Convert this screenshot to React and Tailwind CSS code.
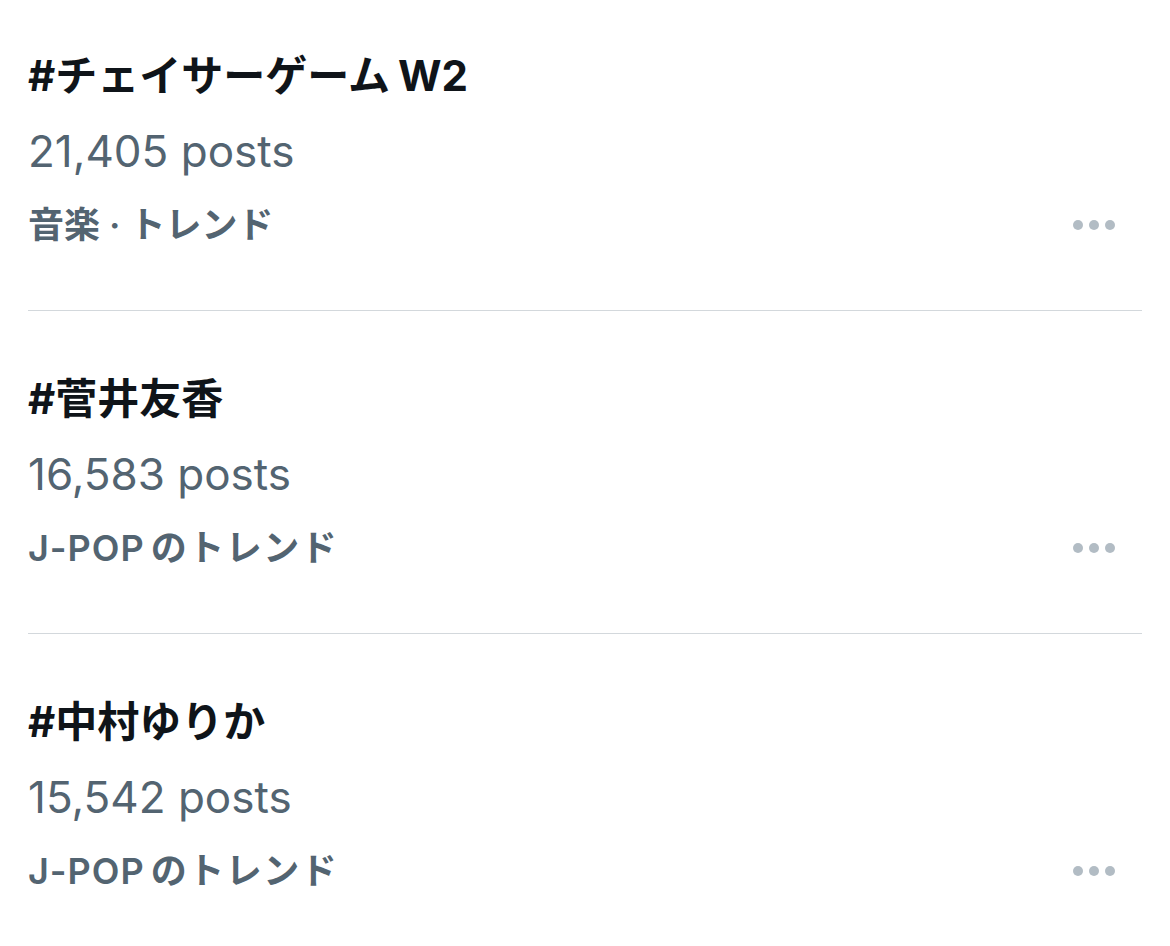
import React from "react";

const trends = [
  { tag: ["#チェイサーゲーム", "W2"], posts: "21,405 posts", category: ["音楽 · トレンド", ""] },
  { tag: ["#菅井友香", ""], posts: "16,583 posts", category: ["J-POP", "のトレンド"] },
  { tag: ["#中村ゆりか", ""], posts: "15,542 posts", category: ["J-POP", "のトレンド"] },
];

export default function App() {
  return (
    <div
      className="bg-white w-[1170px] h-[946px] overflow-hidden px-[28px]"
      style={{ fontFamily: 'Inter, "Noto Sans CJK JP", sans-serif' }}
    >
      {trends.map((t, i) => (
        <div
          key={t.tag[0]}
          className={
            (i === 0 ? "pt-[37px]" : "pt-[49px]") +
            " pb-[49px] border-b border-[#d3d8dc]"
          }
        >
          {/* Title */}
          <div className="h-[76px] flex items-center text-[42px] font-bold text-[#0f1419]">
            <span>{t.tag[0]}</span>
            {t.tag[1] && <span className="ml-[8px]">{t.tag[1]}</span>}
          </div>

          {/* Post count */}
          <div className="h-[76px] flex items-center text-[44px] text-[#536471]">
            {t.posts}
          </div>

          {/* Category + more */}
          <div className="h-[72px] flex items-center justify-between">
            {t.category[1] ? (
              <div className="flex items-center text-[36px] font-semibold text-[#536471] tracking-[1px]">
                <span>{t.category[0]}</span>
                <span className="ml-[6px] tracking-[1.5px]">{t.category[1]}</span>
              </div>
            ) : (
              <div className="flex items-center text-[36px] font-semibold text-[#536471]">
                <span>{t.category[0]}</span>
              </div>
            )}
            <div className="flex items-center gap-[6px] mr-[27px]">
              <span className="w-[10px] h-[10px] rounded-full bg-[#b2bcc4]" />
              <span className="w-[10px] h-[10px] rounded-full bg-[#b2bcc4]" />
              <span className="w-[10px] h-[10px] rounded-full bg-[#b2bcc4]" />
            </div>
          </div>
        </div>
      ))}
    </div>
  );
}
